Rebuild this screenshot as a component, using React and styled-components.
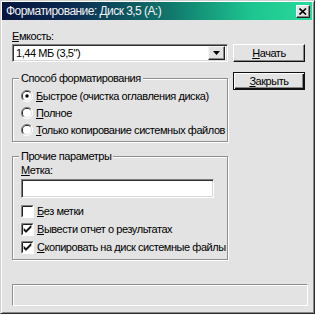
import React from 'react';
import styled, { createGlobalStyle } from 'styled-components';

const Global = createGlobalStyle`
  html, body { margin: 0; padding: 0; background: #ffffff; }
  body { font-family: "Liberation Sans", Arial, sans-serif; font-size: 11px; letter-spacing: -0.45px; color: #000; }
  * { box-sizing: border-box; }
`;

const Window = styled.div`
  width: 315px;
  height: 314px;
  background: #e3e3e3;
  border-left: 1px solid #d0d0d0;
  border-top: 1px solid #d0d0d0;
  border-right: 1px solid #2a2a2a;
  border-bottom: 1px solid #2a2a2a;
  box-shadow: inset 1px 1px 0 #ffffff, inset -1px -1px 0 #8a8a8a;
  padding: 0 2px 2px 1px;
  display: flex;
  flex-direction: column;
`;

const TitleBar = styled.div`
  height: 18px;
  margin-top: 1px;
  display: flex;
  align-items: center;
  justify-content: space-between;
  padding: 0 2px 0 4px;
  background: linear-gradient(90deg, #08163e 0%, #0b2a50 22%, #107a6c 55%, #1dc48f 80%, #2ad99c 100%);
  color: #f2f2f2;
  font-size: 12px;
  letter-spacing: -0.55px;
`;

const CloseButton = styled.div`
  width: 14px;
  height: 13px;
  background: #e3e3e3;
  border-top: 1px solid #ffffff;
  border-left: 1px solid #ffffff;
  border-right: 1px solid #202020;
  border-bottom: 1px solid #202020;
  box-shadow: inset -1px -1px 0 #888;
  display: flex;
  align-items: center;
  justify-content: center;
`;

const Body = styled.div`
  display: flex;
  gap: 5px;
  padding: 0 6px 0 10px;
`;

const LeftCol = styled.div`
  width: 216px;
  display: flex;
  flex-direction: column;
  padding-top: 10px;
`;

const RightCol = styled.div`
  width: 72px;
  display: flex;
  flex-direction: column;
  gap: 10px;
  padding-top: 24px;
`;

const Label = styled.div`
  line-height: 13px;
  height: 13px;
  white-space: nowrap;
`;

const U = styled.span`
  text-decoration: underline;
`;

const Combo = styled.div`
  margin-top: 1px;
  height: 18px;
  background: #fff;
  border-top: 1px solid #808080;
  border-left: 1px solid #808080;
  border-right: 1px solid #ffffff;
  border-bottom: 1px solid #ffffff;
  box-shadow: inset 1px 1px 0 #303030, inset -1px -1px 0 #d8d8d8;
  display: flex;
  align-items: center;
  justify-content: space-between;
  padding: 2px 2px 2px 3px;
`;

const ComboText = styled.span`
  line-height: 12px;
`;

const ArrowButton = styled.div`
  width: 17px;
  height: 14px;
  background: #e3e3e3;
  border-top: 1px solid #f4f4f4;
  border-left: 1px solid #f4f4f4;
  border-right: 1px solid #202020;
  border-bottom: 1px solid #202020;
  box-shadow: inset -1px -1px 0 #888;
  display: flex;
  align-items: center;
  justify-content: center;
`;

const Button = styled.div`
  height: 18px;
  background: #e3e3e3;
  display: flex;
  align-items: center;
  justify-content: center;
  border: 1px solid #101010;
  border-top-color: ${p => (p.$default ? '#101010' : '#ffffff')};
  border-left-color: ${p => (p.$default ? '#101010' : '#ffffff')};
  box-shadow: ${p =>
    p.$default
      ? 'inset 1px 1px 0 #fff, inset -1px -1px 0 #101010, inset -2px -2px 0 #888'
      : 'inset -1px -1px 0 #888'};
`;

const Group = styled.div`
  position: relative;
  margin-top: ${p => p.$mt}px;
  border: 1px solid #8f8f8f;
  box-shadow: inset 1px 1px 0 #ffffff, 1px 1px 0 #ffffff;
  padding: ${p => p.$pt}px 4px 3px 8px;
  display: flex;
  flex-direction: column;
`;

const Legend = styled.span`
  position: absolute;
  top: -7px;
  left: 6px;
  padding: 0 2px;
  background: #e3e3e3;
  line-height: 13px;
  white-space: nowrap;
`;

const OptionRow = styled.div`
  height: ${p => p.$h}px;
  display: flex;
  align-items: center;
  gap: ${p => p.$gap}px;
  white-space: nowrap;
  & > svg { flex-shrink: 0; }
`;

const OptionText = styled.span`
  flex-shrink: 0;
`;

const TextInput = styled.div`
  margin-top: 2px;
  width: 193px;
  height: 19px;
  background: #fff;
  border-top: 1px solid #808080;
  border-left: 1px solid #808080;
  border-right: 1px solid #ffffff;
  border-bottom: 1px solid #ffffff;
  box-shadow: inset 1px 1px 0 #303030, inset -1px -1px 0 #d8d8d8;
  margin-bottom: 4px;
`;

const StatusBar = styled.div`
  margin: 24px 4px 0 10px;
  height: 22px;
  border-top: 1px solid #8f8f8f;
  border-left: 1px solid #8f8f8f;
  border-right: 1px solid #ffffff;
  border-bottom: 1px solid #ffffff;
  box-shadow: inset 1px 1px 0 #ffffff;
`;

const Radio = ({ checked }) => (
  <svg width="12" height="12" viewBox="0 0 12 12">
    <path d="M10 2 A5.5 5.5 0 0 0 2 10" fill="none" stroke="#808080" strokeWidth="1" />
    <path d="M9.3 2.7 A4.5 4.5 0 0 0 2.7 9.3" fill="none" stroke="#202020" strokeWidth="1" />
    <path d="M2 10 A5.5 5.5 0 0 0 10 2" fill="none" stroke="#ffffff" strokeWidth="1" />
    <circle cx="6" cy="6" r="4" fill="#fff" />
    {checked && <circle cx="6" cy="6" r="1.7" fill="#000" />}
  </svg>
);

const Check = ({ checked }) => (
  <svg width="13" height="13" viewBox="0 0 13 13">
    <rect x="0" y="0" width="13" height="13" fill="#fff" />
    <path d="M0.5 12.5 V0.5 H12.5" fill="none" stroke="#808080" />
    <path d="M1.5 11.5 V1.5 H11.5" fill="none" stroke="#202020" />
    <path d="M12.5 0.5 V12.5 H0.5" fill="none" stroke="#ffffff" />
    {checked && (
      <path d="M3 5.5 L5 7.5 L10 2.5 V4.5 L5 9.5 L3 7.5 Z" fill="#000" stroke="#000" strokeWidth="0.6" />
    )}
  </svg>
);

export default function App() {
  return (
    <>
      <Global />
      <Window>
        <TitleBar>
          <span>Форматирование: Диск 3,5 (A:)</span>
          <CloseButton>
            <svg width="8" height="7" viewBox="0 0 8 7">
              <path d="M0.5 0.5 L7 6.5 M7 0.5 L0.5 6.5" stroke="#000" strokeWidth="1.6" />
            </svg>
          </CloseButton>
        </TitleBar>
        <Body>
          <LeftCol>
            <Label><U>Е</U>мкость:</Label>
            <Combo>
              <ComboText>1,44 МБ (3,5")</ComboText>
              <ArrowButton>
                <svg width="7" height="4" viewBox="0 0 7 4">
                  <path d="M0 0 H7 L3.5 4 Z" fill="#000" />
                </svg>
              </ArrowButton>
            </Combo>
            <Group $mt={16} $pt={8}>
              <Legend>Способ форматирования</Legend>
              <OptionRow $h={17} $gap={3}>
                <Radio checked />
                <OptionText><U>Б</U>ыстрое (очистка оглавления диска)</OptionText>
              </OptionRow>
              <OptionRow $h={17} $gap={3}>
                <Radio />
                <OptionText><U>П</U>олное</OptionText>
              </OptionRow>
              <OptionRow $h={17} $gap={3}>
                <Radio />
                <OptionText><U>Т</U>олько копирование системных файлов</OptionText>
              </OptionRow>
            </Group>
            <Group $mt={14} $pt={7}>
              <Legend>Прочие параметры</Legend>
              <Label><U>М</U>етка:</Label>
              <TextInput />
              <OptionRow $h={18} $gap={3}>
                <Check />
                <OptionText><U>Б</U>ез метки</OptionText>
              </OptionRow>
              <OptionRow $h={18} $gap={3}>
                <Check checked />
                <OptionText><U>В</U>ывести отчет о результатах</OptionText>
              </OptionRow>
              <OptionRow $h={18} $gap={3}>
                <Check checked />
                <OptionText><U>С</U>копировать на диск системные файлы</OptionText>
              </OptionRow>
            </Group>
          </LeftCol>
          <RightCol>
            <Button><span><U>Н</U>ачать</span></Button>
            <Button $default><span><U>З</U>акрыть</span></Button>
          </RightCol>
        </Body>
        <StatusBar />
      </Window>
    </>
  );
}
